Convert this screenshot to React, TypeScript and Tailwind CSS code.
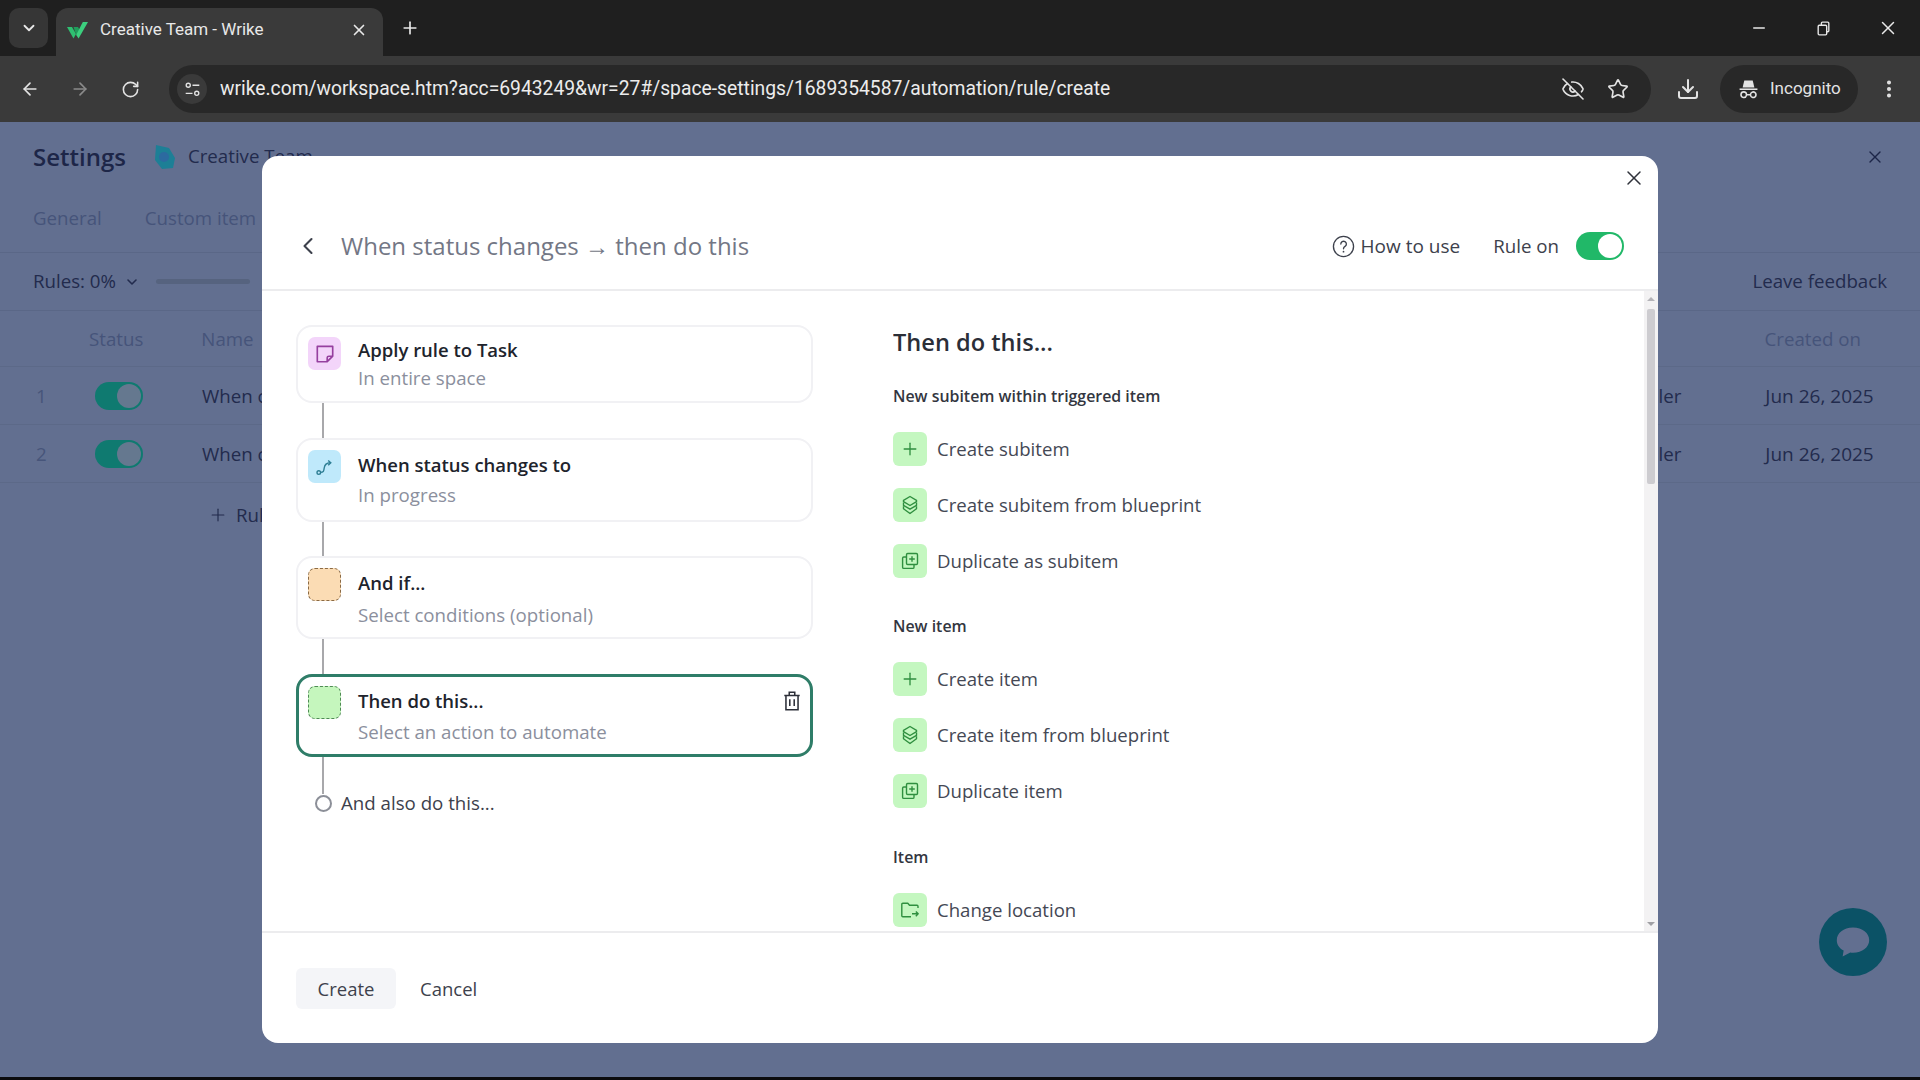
import React from "react";
import { ArrowLeft, ArrowRight, RotateCw, Star, Download, EyeOff, X, Plus, ChevronDown, ChevronLeft, Minus, EllipsisVertical } from "lucide-react";

type IconProps = { className?: string };

const Sticky = ({ className }: IconProps) => (
  <svg viewBox="0 0 20 20" fill="none" stroke="currentColor" strokeWidth="1.5" className={className}>
    <path d="M3 3h14v9l-5 5H3z" strokeLinejoin="round" />
    <path d="M17 12h-3.500a1.500 1.500 0 0 0-1.500 1.500V17" />
  </svg>
);

const RouteIcon = ({ className }: IconProps) => (
  <svg viewBox="0 0 20 20" fill="none" stroke="currentColor" strokeWidth="1.4" className={className}>
    <circle cx="3.800" cy="15.600" r="1.800" />
    <path d="M5.600 15.400c3 0 3.200-1.600 3.600-4.400.4-2.800 1.400-5 6-5.200" />
    <path d="M13.200 3.400l2.600 2.400-2.600 2.400" />
  </svg>
);

const Blueprint = ({ className }: IconProps) => (
  <svg viewBox="0 0 20 20" fill="none" stroke="currentColor" strokeWidth="1.4" strokeLinejoin="round" className={className}>
    <path d="M10 1.500l6.500 3.800v1.400L10 10.500 3.500 6.700V5.300z" />
    <path d="M3.500 7.500v2.900L10 14.200l6.500-3.800V7.500" />
    <path d="M3.500 11.200v2.500L10 18.500l6.500-4.800v-2.500" />
  </svg>
);

const DuplicatePlus = ({ className }: IconProps) => (
  <svg viewBox="0 0 20 20" fill="none" stroke="currentColor" strokeWidth="1.4" strokeLinejoin="round" className={className}>
    <rect x="6.500" y="2.500" width="11" height="11" rx="1.200" />
    <path d="M12 5.200v5.600M9.200 8h5.600" />
    <path d="M6.500 6H3.800a1.200 1.200 0 0 0-1.200 1.200v9a1.200 1.200 0 0 0 1.200 1.200h9a1.200 1.200 0 0 0 1.200-1.200v-2.700" />
  </svg>
);

const FolderMove = ({ className }: IconProps) => (
  <svg viewBox="0 0 20 20" fill="none" stroke="currentColor" strokeWidth="1.4" strokeLinejoin="round" className={className}>
    <path d="M18 8V6.200a1 1 0 0 0-1-1H9.500L7.800 3.200H2.800a1 1 0 0 0-1 1v11.600a1 1 0 0 0 1 1H11" />
    <path d="M12 13.800h6.200M15.800 11.400l2.400 2.400-2.400 2.400" />
  </svg>
);

const TrashIcon = ({ className }: IconProps) => (
  <svg viewBox="0 0 20 20" fill="none" stroke="currentColor" strokeWidth="1.4" className={className}>
    <path d="M3 5h14M7.500 5V2h5v3M4.500 5v13h11V5M8 8.500v6M12 8.500v6" />
  </svg>
);

const HelpIcon = ({ className }: IconProps) => (
  <svg viewBox="0 0 24 24" fill="none" stroke="currentColor" strokeWidth="1.4" className={className}>
    <circle cx="12" cy="12" r="10.500" />
    <path d="M9.200 9.400a2.900 2.900 0 1 1 4.400 2.500c-1 .6-1.600 1.200-1.600 2.400" strokeLinecap="round" />
    <circle cx="12" cy="17.400" r=".9" fill="currentColor" stroke="none" />
  </svg>
);

const SiteIcon = ({ className }: IconProps) => (
  <svg viewBox="0 0 20 20" fill="none" stroke="currentColor" strokeWidth="1.600" className={className}>
    <circle cx="5" cy="5" r="2.400" />
    <path d="M10 5h8M2 14.500h8" />
    <circle cx="15" cy="14.500" r="2.400" />
  </svg>
);

const IncognitoIcon = ({ className }: IconProps) => (
  <svg viewBox="0 0 20 20" fill="currentColor" className={className}>
    <path d="M6 1.500h8l1.600 6.500H4.400z" />
    <path d="M1.500 9h17v1.500h-17z" />
    <path fillRule="evenodd" d="M5.500 11.500a3.400 3.400 0 0 1 3.300 2.700h2.400a3.400 3.400 0 1 1 0 1.500H8.800a3.400 3.400 0 1 1-3.300-4.200zm0 1.500a1.900 1.900 0 1 0 0 3.800 1.900 1.900 0 0 0 0-3.800zm9 0a1.900 1.900 0 1 0 0 3.800 1.900 1.900 0 0 0 0-3.800z" />
  </svg>
);

const RestoreIcon = ({ className }: IconProps) => (
  <svg viewBox="0 0 16 16" fill="none" stroke="currentColor" strokeWidth="1.300" className={className}>
    <rect x="3" y="5" width="8" height="9" rx="1" />
    <path d="M6 5V3a1 1 0 0 1 1-1h5a1 1 0 0 1 1 1v7a1 1 0 0 1-1 1h-1" />
  </svg>
);

const WrikeCheck = ({ className }: IconProps) => (
  <svg viewBox="0 0 22 18" className={className}>
    <path d="M0 6h5l4 7-2.500 4.500z" fill="#2fbf71" />
    <path d="M6.500 6h4.500l2 3.500L9.200 14z" fill="#1f9d5b" />
    <path d="M9.200 14L15.800 1H21L11.600 17.500z" fill="#3ccf7e" />
  </svg>
);

const SpaceIcon = ({ className }: IconProps) => (
  <svg viewBox="0 0 24 26" className={className}>
    <path d="M3 1l13 3 6 10-2 10-11 1-7-9z" fill="#1d7f96" />
    <circle cx="11" cy="13" r="5" fill="#2c6aa0" />
  </svg>
);

const ChatIcon = ({ className }: IconProps) => (
  <svg viewBox="0 0 40 36" className={className}>
    <path d="M20 2C9.500 2 2 8.400 2 16c0 5 3 9 7.600 11.500L8.500 34l8.500-4.400c1 .2 2 .3 3 .3 10.500 0 18-6.300 18-13.900S30.500 2 20 2z" fill="currentColor" />
  </svg>
);

const Toggle = ({ on, off }: { on: string; off: string }) => (
  <div className={`flex h-[28px] w-[48px] items-center justify-end rounded-full p-[2px] ${on}`}>
    <div className={`h-[24px] w-[24px] rounded-full ${off}`} />
  </div>
);

type BgRowProps = { n: string };

const BgRow = ({ n }: BgRowProps) => (
  <div className="flex h-[58px] items-center border-b border-[#5c6988] pl-[36px] pt-[1px] text-[18.7px] text-[#222b4d]">
    <span className="w-[59px] text-[#47557a]">{n}</span>
    <Toggle on="bg-[#0f7a70]" off="bg-[#65788f]" />
    <span className="ml-[59px]">When c</span>
    <span className="ml-[1392px]">ler</span>
    <span className="ml-[84px] text-[19px]">Jun 26, 2025</span>
  </div>
);

const StepCard = ({
  title,
  sub,
  h,
  titleTop,
  subGap,
  children,
  active,
  iconClass,
}: {
  title: string;
  sub: string;
  h: string;
  titleTop: string;
  subGap: string;
  children?: React.ReactNode;
  active?: boolean;
  iconClass: string;
}) => (
  <div
    className={`flex w-[517px] rounded-[16px] bg-white ${h} ${
      active ? "border-[3px] border-[#2f7d68] pl-[9px] pr-[7px] pt-[9px]" : "border-2 border-[#f1f1f4] px-[10px] pt-[10px]"
    }`}
  >
    <div className={`flex h-[33px] w-[33px] shrink-0 items-center justify-center rounded-[7px] ${iconClass}`}>{children}</div>
    <div className={`ml-[17px] flex-1 ${titleTop}`}>
      <div className="text-[18.5px] font-semibold leading-[24px] text-[#20232c]">{title}</div>
      <div className={`text-[18.7px] leading-[24px] text-[#8b8f9d] ${subGap}`}>{sub}</div>
    </div>
    {active && <TrashIcon className="mt-[4px] h-[22px] w-[22px] text-[#2c2f38]" />}
  </div>
);

const Connector = ({ h }: { h: string }) => <div className={`ml-[26px] w-[2px] bg-[#a8a8ab] ${h}`} />;

type ActionItem = { label: string; icon: React.FC<IconProps> };

const PlusIcon = ({ className }: IconProps) => <Plus className={className} strokeWidth={1.6} />;

const sections: { title: string; gap: string; items: ActionItem[] }[] = [
  {
    title: "New subitem within triggered item",
    gap: "mt-[30px]",
    items: [
      { label: "Create subitem", icon: PlusIcon },
      { label: "Create subitem from blueprint", icon: Blueprint },
      { label: "Duplicate as subitem", icon: DuplicatePlus },
    ],
  },
  {
    title: "New item",
    gap: "mt-[38px]",
    items: [
      { label: "Create item", icon: PlusIcon },
      { label: "Create item from blueprint", icon: Blueprint },
      { label: "Duplicate item", icon: DuplicatePlus },
    ],
  },
  {
    title: "Item",
    gap: "mt-[39px]",
    items: [{ label: "Change location", icon: FolderMove }],
  },
];

export default function App() {
  return (
    <div className="relative flex h-[1080px] w-[1920px] flex-col overflow-hidden bg-[#626f90] font-['Open_Sans',sans-serif]">
      {/* browser tabs */}
      <div className="flex h-[56px] shrink-0 bg-[#1f1f1f] pl-[9px] pt-[8px] text-[#e8e8e8]">
        <div className="flex h-[40px] w-[39px] items-center justify-center rounded-[10px] bg-[#363636]">
          <ChevronDown className="h-[18px] w-[18px]" strokeWidth={2.4} />
        </div>
        <div className="ml-[8px] flex h-[48px] w-[327px] items-center rounded-t-[12px] bg-[#3a3a3a] pb-[4px] pl-[11px] pr-[15px]">
          <WrikeCheck className="h-[18px] w-[22px]" />
          <span className="ml-[11px] flex-1 font-['Roboto',sans-serif] text-[17px]">Creative Team - Wrike</span>
          <X className="h-[18px] w-[18px]" strokeWidth={2.2} />
        </div>
        <Plus className="ml-[17px] mt-[10px] h-[20px] w-[20px]" strokeWidth={2} />
        <div className="ml-auto flex h-[40px] items-center pr-[21px]">
          <Minus className="h-[18px] w-[18px]" strokeWidth={2} />
          <RestoreIcon className="ml-[47px] h-[17px] w-[17px]" />
          <X className="ml-[45px] h-[22px] w-[22px]" strokeWidth={1.6} />
        </div>
      </div>

      {/* browser toolbar */}
      <div className="flex h-[66px] shrink-0 items-center bg-[#3a3a3a] pl-[20px] text-[#e3e3e3]">
        <ArrowLeft className="h-[20px] w-[20px]" strokeWidth={2} />
        <ArrowRight className="ml-[30px] h-[20px] w-[20px] text-[#8a8a8a]" strokeWidth={2} />
        <RotateCw className="ml-[31px] h-[19px] w-[19px]" strokeWidth={2} />
        <div className="ml-[29px] flex h-[48px] w-[1482px] items-center rounded-full bg-[#282828] pl-[8px] pr-[22px]">
          <div className="flex h-[30px] w-[30px] items-center justify-center rounded-full bg-[#3a3a3a]">
            <SiteIcon className="h-[17px] w-[17px]" />
          </div>
          <span className="ml-[13px] flex-1 font-['Roboto',sans-serif] text-[19.3px] text-[#ececec]">
            wrike.com/workspace.htm?acc=6943249&amp;wr=27#/space-settings/1689354587/automation/rule/create
          </span>
          <EyeOff className="h-[24px] w-[24px]" strokeWidth={1.6} />
          <Star className="ml-[22px] h-[22px] w-[22px]" strokeWidth={1.8} />
        </div>
        <Download className="ml-[25px] h-[24px] w-[24px]" strokeWidth={2} />
        <div className="ml-[20px] flex h-[48px] w-[138px] items-center rounded-full bg-[#282828] pl-[18px]">
          <IncognitoIcon className="h-[21px] w-[21px]" />
          <span className="ml-[11px] font-['Roboto',sans-serif] text-[17px]">Incognito</span>
        </div>
        <EllipsisVertical className="ml-[20px] h-[22px] w-[22px]" strokeWidth={2.4} />
      </div>

      {/* page behind the dialog */}
      <div className="flex min-h-0 flex-1 flex-col border-b-[3px] border-[#0c0c0e]">
        <div className="flex h-[70px] shrink-0 items-center pl-[33px] pr-[35px]">
          <span className="text-[24px] font-semibold text-[#1d2648]">Settings</span>
          <SpaceIcon className="ml-[27px] h-[26px] w-[24px]" />
          <span className="ml-[11px] mb-[2px] text-[18.7px] text-[#222b4d]">Creative Team</span>
          <X className="ml-auto h-[20px] w-[20px] text-[#1d2648]" strokeWidth={1.6} />
        </div>
        <div className="flex h-[61px] shrink-0 items-center gap-[43px] border-b border-[#5a6787] pl-[33px] pb-[8px] text-[18.7px] text-[#46547a]">
          <span>General</span>
          <span>Custom item</span>
        </div>
        <div className="flex h-[58px] shrink-0 items-center border-b border-[#5a6787] pl-[33px] pr-[33px] text-[18.7px] text-[#222b4d]">
          <span>Rules: 0%</span>
          <ChevronDown className="ml-[8px] h-[16px] w-[16px]" strokeWidth={2.4} />
          <div className="ml-[16px] h-[5px] w-[94px] rounded-full bg-[#56637f]" />
          <span className="ml-auto">Leave feedback</span>
        </div>
        <div className="flex h-[56px] shrink-0 items-center border-b border-[#5c6988] pl-[89px] pt-[2px] text-[18.7px] text-[#46547a]">
          <span>Status</span>
          <span className="ml-[58px]">Name</span>
          <span className="ml-[1511px]">Created on</span>
        </div>
        <BgRow n="1" />
        <BgRow n="2" />
        <div className="flex items-center pl-[208px] pt-[18px] text-[18.7px] text-[#222b4d]">
          <Plus className="h-[20px] w-[20px]" strokeWidth={1.4} />
          <span className="ml-[8px]">Rule</span>
        </div>
      </div>

      {/* chat button */}
      <div className="absolute left-[1819px] top-[908px] flex h-[68px] w-[68px] items-center justify-center rounded-full bg-[#0b5266] text-[#626f90]">
        <ChatIcon className="h-[36px] w-[36px]" />
      </div>

      {/* dialog */}
      <div className="absolute left-[262px] top-[156px] flex h-[887px] w-[1396px] flex-col overflow-hidden rounded-[16px] bg-white">
        <X className="absolute right-[12px] top-[10px] h-[24px] w-[24px] text-[#30333b]" strokeWidth={1.5} />

        <div className="flex h-[135px] shrink-0 items-center border-b-2 border-[#ececee] pl-[32px] pr-[34px] pt-[47px]">
          <ChevronLeft className="h-[28px] w-[28px] text-[#3d414c]" strokeWidth={1.8} />
          <span className="ml-[19px] text-[24px] text-[#737785]">
            When status changes <span className="font-['Liberation_Sans',sans-serif]">→</span> then do this
          </span>
          <HelpIcon className="ml-auto h-[23px] w-[23px] text-[#3d414c]" />
          <span className="ml-[6px] text-[19px] text-[#3d414c]">How to use</span>
          <span className="ml-[33px] text-[18.7px] text-[#3d414c]">Rule on</span>
          <div className="ml-[17px]">
            <Toggle on="bg-[#21b868]" off="bg-white" />
          </div>
        </div>

        <div className="flex min-h-0 flex-1">
          <div className="w-[631px] shrink-0 pl-[34px] pt-[34px]">
            <StepCard title="Apply rule to Task" sub="In entire space" h="h-[78px]" titleTop="mt-[1px]" subGap="mt-[4px]" iconClass="bg-[#f3d5fa] text-[#96409f]">
              <Sticky className="h-[22px] w-[22px]" />
            </StepCard>
            <Connector h="h-[35px]" />
            <StepCard title="When status changes to" sub="In progress" h="h-[84px]" titleTop="mt-[3px]" subGap="mt-[6px]" iconClass="bg-[#bfe9fb] text-[#2f7f95]">
              <RouteIcon className="h-[20px] w-[20px]" />
            </StepCard>
            <Connector h="h-[34px]" />
            <StepCard title="And if..." sub="Select conditions (optional)" h="h-[83px]" titleTop="mt-[3px]" subGap="mt-[8px]" iconClass="border border-dashed border-[#8a6a45] bg-[#fbdcb4]" />
            <Connector h="h-[35px]" />
            <StepCard title="Then do this..." sub="Select an action to automate" h="h-[83px]" titleTop="mt-[3px]" subGap="mt-[7px]" iconClass="border border-dashed border-[#4f8a55] bg-[#c5f6bd]" active />
            <Connector h="h-[37px]" />
            <div className="ml-[19px] flex h-[18px] items-center">
              <div className="h-[17px] w-[17px] rounded-full border-2 border-[#8c8f98] bg-white" />
              <span className="ml-[9px] text-[18.7px] text-[#3d414c]">And also do this...</span>
            </div>
          </div>

          <div className="min-h-0 flex-1 overflow-hidden pt-[37px]">
            <div className="text-[23.6px] font-semibold leading-[28px] text-[#2b2e37]">Then do this...</div>
            {sections.map((s) => (
              <div key={s.title} className={s.gap}>
                <div className="text-[15.9px] font-semibold leading-[20px] text-[#33363f]">{s.title}</div>
                <div className="mt-[26px] flex flex-col gap-[22px]">
                  {s.items.map((item) => {
                    const Icon = item.icon;
                    return (
                      <div key={item.label} className="flex h-[34px] items-center">
                        <div className="flex h-[34px] w-[34px] items-center justify-center rounded-[6px] bg-[#c4f7c0] text-[#2f8f3f]">
                          <Icon className="h-[20px] w-[20px]" />
                        </div>
                        <span className="ml-[10px] text-[18.6px] text-[#444854]">{item.label}</span>
                      </div>
                    );
                  })}
                </div>
              </div>
            ))}
          </div>

          <div className="flex w-[14px] shrink-0 flex-col items-center bg-[#f3f2f3] pb-[5px] pt-[6px]">
            <div className="h-0 w-0 border-x-[4px] border-b-[4px] border-x-transparent border-b-[#b4b3b8]" />
            <div className="mt-[8px] h-[175px] w-[8px] rounded-[2px] bg-[#cdccd0]" />
            <div className="mt-auto h-0 w-0 border-x-[4px] border-t-[4px] border-x-transparent border-t-[#a0a0a4]" />
          </div>
        </div>

        <div className="flex h-[112px] shrink-0 items-center border-t-2 border-[#ececee] pl-[34px] pt-[1px]">
          <button className="h-[41px] w-[100px] rounded-[6px] bg-[#f4f5f8] text-[18.5px] text-[#3d414c]">Create</button>
          <button className="ml-[24px] text-[18.5px] text-[#3d414c]">Cancel</button>
        </div>
      </div>
    </div>
  );
}
